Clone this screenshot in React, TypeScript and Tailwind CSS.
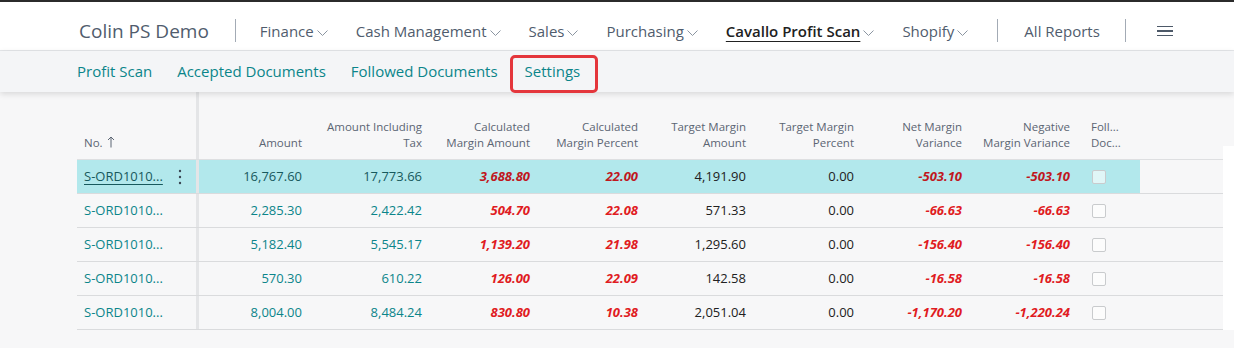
import React from "react";

const navItems = [
  { label: "Finance" },
  { label: "Cash Management" },
  { label: "Sales" },
  { label: "Purchasing" },
  { label: "Cavallo Profit Scan", active: true },
  { label: "Shopify" },
];

const subNav = ["Profit Scan", "Accepted Documents", "Followed Documents"];

const rows = [
  { amount: "16,767.60", incl: "17,773.66", cma: "3,688.80", cmp: "22.00", tma: "4,191.90", tmp: "0.00", net: "-503.10", neg: "-503.10" },
  { amount: "2,285.30", incl: "2,422.42", cma: "504.70", cmp: "22.08", tma: "571.33", tmp: "0.00", net: "-66.63", neg: "-66.63" },
  { amount: "5,182.40", incl: "5,545.17", cma: "1,139.20", cmp: "21.98", tma: "1,295.60", tmp: "0.00", net: "-156.40", neg: "-156.40" },
  { amount: "570.30", incl: "610.22", cma: "126.00", cmp: "22.09", tma: "142.58", tmp: "0.00", net: "-16.58", neg: "-16.58" },
  { amount: "8,004.00", incl: "8,484.24", cma: "830.80", cmp: "10.38", tma: "2,051.04", tmp: "0.00", net: "-1,170.20", neg: "-1,220.24" },
];

function Chevron() {
  return (
    <svg width="13" height="13" viewBox="0 0 13 13" className="ml-[2px] mt-[2px]">
      <polyline points="1.5,4.5 6.5,9.5 11.5,4.5" fill="none" stroke="#8b95a1" strokeWidth="1" />
    </svg>
  );
}

function Divider() {
  return <div className="w-px h-[23px] bg-[#a3abb5]" />;
}

function Head({ lines, w }: { lines: string[]; w: string }) {
  return (
    <div className={`${w} flex flex-col justify-end items-end pr-2 pb-[9px] text-[11.5px] leading-[15.5px] text-[#5b6573] text-right`}>
      {lines.map((l) => (
        <span key={l} className="whitespace-nowrap">{l}</span>
      ))}
    </div>
  );
}

function Num({ v, w, kind, sel }: { v: string; w: string; kind: "link" | "plain" | "bad"; sel: boolean }) {
  const color =
    kind === "link"
      ? sel
        ? "text-[#17595d]"
        : "text-[#0b858a]"
      : kind === "bad"
      ? sel
        ? "text-[#c0171d] font-bold italic"
        : "text-[#e01b22] font-bold italic"
      : "text-[#212121]";
  return <div className={`${w} flex items-center justify-end pr-2 ${color}`}>{v}</div>;
}

export default function App() {
  return (
    <div className="w-[1234px] h-[348px] overflow-hidden bg-[#f7f7f8] font-['Open_Sans',sans-serif]">
      <div className="h-[2px] bg-[#2b2b2b]" />
      <div className="h-[49px] bg-white border-b border-[#e4e6e9] flex items-center pt-[9px] pl-[79px] text-[#505c6d]">
        <span className="text-[19px] pt-[1px]">Colin PS Demo</span>
        <div className="ml-[26px] mr-[24px]">
          <Divider />
        </div>
        <div className="flex items-center gap-[27px] text-[15px] pt-[2px]">
          {navItems.map((n) => (
            <div key={n.label} className="flex items-center">
              <span className={n.active ? "font-semibold text-[#212121] underline underline-offset-[4px] decoration-1" : ""}>{n.label}</span>
              <Chevron />
            </div>
          ))}
        </div>
        <div className="ml-[28px] mr-[26px]">
          <Divider />
        </div>
        <span className="text-[15px] pt-[2px]">All Reports</span>
        <div className="ml-[25px] mr-[31px]">
          <Divider />
        </div>
        <div className="flex flex-col gap-[3px] w-[16px] pt-[1px]">
          <div className="h-[1.5px] bg-[#4d5968]" />
          <div className="h-[1.5px] bg-[#4d5968]" />
          <div className="h-[1.5px] bg-[#4d5968]" />
        </div>
      </div>
      <div className="relative z-10 h-[41px] bg-[#f4f5f7] shadow-[0_2px_6px_rgba(0,0,0,0.13)] flex items-center pl-[77px] gap-[25px] text-[15px] text-[#0b858a]">
        {subNav.map((s) => (
          <span key={s}>{s}</span>
        ))}
        <span className="relative ml-[2px]">
          Settings
          <span className="absolute -left-[15px] -right-[18px] -top-[5px] -bottom-[10px] border-[3px] border-[#e4363c] rounded-[5px]" />
        </span>
      </div>
      <div className="flex">
        <div className="w-[1223px] pl-[77px]">
          <div className="flex h-[68px] border-b border-[#dedfe1]">
            <div className="w-[122px] border-r-[3px] border-[#e4e5e7] flex items-end pl-[7px] pb-[9px] text-[11.5px] leading-[15.5px] text-[#5b6573]">
              <span>No.</span>
              <svg width="8" height="12" viewBox="0 0 8 12" className="ml-[4px] mb-[2px]">
                <path d="M4 11.5V1 M1 4 L4 1 L7 4" fill="none" stroke="#5b6573" strokeWidth="1" />
              </svg>
            </div>
            <Head w="w-[111px]" lines={["Amount"]} />
            <Head w="w-[120px]" lines={["Amount Including", "Tax"]} />
            <Head w="w-[108px]" lines={["Calculated", "Margin Amount"]} />
            <Head w="w-[108px]" lines={["Calculated", "Margin Percent"]} />
            <Head w="w-[108px]" lines={["Target Margin", "Amount"]} />
            <Head w="w-[108px]" lines={["Target Margin", "Percent"]} />
            <Head w="w-[108px]" lines={["Net Margin", "Variance"]} />
            <Head w="w-[108px]" lines={["Negative", "Margin Variance"]} />
            <div className="w-[62px] flex flex-col justify-end pl-[13px] pb-[9px] text-[11.5px] leading-[15.5px] text-[#5b6573]">
              <span>Foll...</span>
              <span>Doc...</span>
            </div>
          </div>
          {rows.map((r, i) => {
            const sel = i === 0;
            return (
              <div key={i} className="flex h-[34px] border-b border-[#dadbdd] text-[13px]">
                <div className={`flex ${sel ? "bg-[#b2e8ec]" : ""}`}>
                  <div className="w-[122px] border-r-[3px] border-[#e4e5e7] flex items-center pl-[7px]">
                    <span className={`w-[94px] ${sel ? "text-[#17595d] underline underline-offset-[3px]" : "text-[#0b858a]"}`}>S-ORD1010...</span>
                    {sel && (
                      <svg width="4" height="16" viewBox="0 0 4 16">
                        <circle cx="2" cy="2" r="1.2" fill="#3b4652" />
                        <circle cx="2" cy="8" r="1.2" fill="#3b4652" />
                        <circle cx="2" cy="14" r="1.2" fill="#3b4652" />
                      </svg>
                    )}
                  </div>
                  <Num w="w-[111px]" v={r.amount} kind="link" sel={sel} />
                  <Num w="w-[120px]" v={r.incl} kind="link" sel={sel} />
                  <Num w="w-[108px]" v={r.cma} kind="bad" sel={sel} />
                  <Num w="w-[108px]" v={r.cmp} kind="bad" sel={sel} />
                  <Num w="w-[108px]" v={r.tma} kind="plain" sel={sel} />
                  <Num w="w-[108px]" v={r.tmp} kind="plain" sel={sel} />
                  <Num w="w-[108px]" v={r.net} kind="bad" sel={sel} />
                  <Num w="w-[108px]" v={r.neg} kind="bad" sel={sel} />
                  <div className="w-[62px] flex items-center pl-[14px]">
                    <div className="w-[14px] h-[14px] rounded-[2px] border border-[#c9cbcd] bg-white/60" />
                  </div>
                </div>
                <div className="flex-1" />
              </div>
            );
          })}
        </div>
        <div className="flex-1 mt-[54px] bg-white" />
      </div>
    </div>
  );
}
